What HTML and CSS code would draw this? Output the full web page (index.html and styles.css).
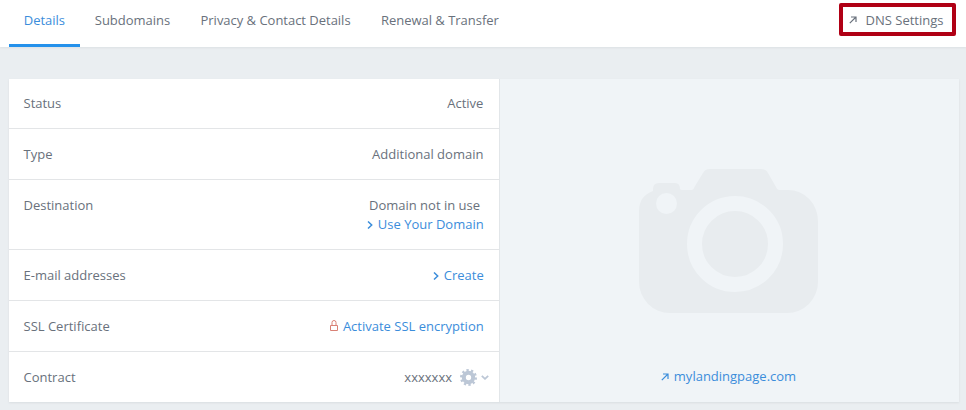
FILE: index.html
```html
<!DOCTYPE html>
<html lang="en">
<head>
<meta charset="utf-8">
<title>Domain details</title>
<link rel="stylesheet" href="styles.css">
</head>
<body>
<header class="topbar">
  <nav class="tabs">
    <a class="tab active">Details</a>
    <a class="tab">Subdomains</a>
    <a class="tab">Privacy &amp; Contact Details</a>
    <a class="tab">Renewal &amp; Transfer</a>
  </nav>
  <a class="dns"><svg class="arrow" viewBox="0 0 8 8"><path d="M2 1H7v5M7 1 .8 7.200"/></svg><span>DNS Settings</span></a>
</header>
<main class="card">
  <section class="rows">
    <div class="row first"><span>Status</span><span>Active</span></div>
    <div class="row"><span>Type</span><span>Additional domain</span></div>
    <div class="row tall"><span>Destination</span>
      <div class="stack"><span class="unused">Domain not in use</span><a class="link"><svg class="chev" viewBox="0 0 6 8"><path d="M1 .5 4.700 4 1 7.500"/></svg>Use Your Domain</a></div></div>
    <div class="row"><span>E-mail addresses</span><a class="link"><svg class="chev" viewBox="0 0 6 8"><path d="M1 .5 4.700 4 1 7.500"/></svg>Create</a></div>
    <div class="row"><span>SSL Certificate</span><a class="link"><svg class="lock" viewBox="0 0 9 11"><path d="M.5 5.500h7v5h-7zM2 5.500V2.500a2 2 0 0 1 4 0v3"/></svg>Activate SSL encryption</a></div>
    <div class="row last"><span>Contract</span>
      <div class="contract"><span>xxxxxxx</span>
        <svg class="gear" viewBox="0 0 16 16"><g fill="none" stroke="#bcc7d6"><circle cx="8" cy="8" r="4.400" stroke-width="3.800"/><circle cx="8" cy="8" r="6.800" stroke-width="2.400" stroke-dasharray="2.136 2.136"/></g></svg>
        <svg class="down" viewBox="0 0 8 5"><path d="M.8.800 4 3.800 7.200.800"/></svg>
      </div></div>
  </section>
  <section class="preview">
    <svg class="camera" viewBox="0 0 180 144"><path fill="#e8ecef" d="M14 22V20Q14 14 20 14H36Q41 14 41 20 41 21 43 21H53Q55 20 56 17L64 4Q66 0 71 0H122Q127 0 129 4L137 18Q138 21 140 21H149A30 31 0 0 1 179 52V113A31 31 0 0 1 148 144H31A31 31 0 0 1 0 113V42Q0 27 14 22Z"/><circle cx="27.500" cy="34.500" r="10.500" fill="#f0f4f7"/><circle cx="96" cy="75" r="40.500" fill="none" stroke="#f0f4f7" stroke-width="15"/></svg>
    <a class="site"><svg class="arrow" viewBox="0 0 8 8"><path d="M2 1H7v5M7 1 .8 7.200"/></svg><span>mylandingpage.com</span></a>
  </section>
</main>
</body>
</html>
```
FILE: styles.css
```css
* { box-sizing: border-box; }
body {
  margin: 0;
  height: 410px;
  overflow: hidden;
  background: #eaeef1;
  color: #69717c;
  font: 13px/19px "Open Sans", sans-serif;
}
svg { display: block; flex: none; fill: none; }
.topbar {
  display: flex;
  justify-content: space-between;
  height: 47px;
  padding-left: 9px;
  background: #fff;
  box-shadow: 0 1px 2px #dce0e3;
}
.tabs { display: flex; letter-spacing: -0.02px; }
.tab { padding: 11px 15.600px 0 14.800px; border-bottom: 3px solid transparent; white-space: nowrap; }
.active { width: 71px; color: #3b8ddb; border-color: #2491eb; }
.dns {
  display: flex;
  align-items: center;
  justify-content: space-between;
  width: 117px;
  height: 33px;
  margin: 3px 10px 0 0;
  padding: 1px 8.500px 0 6px;
  border: 4px solid #b00015;
  border-radius: 2px;
}
.arrow { width: 8px; height: 8px; stroke: currentColor; stroke-width: 1.2; }
.card {
  display: flex;
  width: 950px;
  height: 323px;
  margin: 32px 0 0 9px;
  box-shadow: 0 1px 2px #d9dee1;
}
.rows { width: 491px; background: #fff; border-right: 1px solid #e2e6e9; }
.row {
  display: flex;
  justify-content: space-between;
  height: 51px;
  padding: 16px 15.600px 0 14.500px;
  border-bottom: 1px solid #e3e5e7;
}
.first { height: 50px; padding-top: 15px; }
.tall { height: 70px; }
.last { height: 50px; border: 0; padding-right: 10px; }
.stack { display: flex; flex-direction: column; align-items: flex-end; }
.unused { padding-right: 3.400px; }
.link { display: flex; height: 19px; align-items: center; margin-right: -0.300px; color: #3b8ddb; }
.chev { width: 6px; height: 8px; margin-right: 5px; stroke: currentColor; stroke-width: 1.5; }
.lock { width: 9px; height: 11px; margin: 0 4px 2px 0; stroke: #d98175; }
.contract { display: flex; height: 19px; align-items: center; }
.gear { width: 17px; height: 17px; margin: 0 4px 0 8px; }
.down { width: 8px; height: 5px; stroke: #bcc7d6; stroke-width: 1.8; }
.preview {
  display: flex;
  flex-direction: column;
  align-items: center;
  flex: 1;
  padding: 90px 2px 0 0;
  background: #f0f4f7;
}
.camera { width: 180px; height: 144px; }
.site { display: flex; align-items: center; gap: 5px; margin-top: 54px; color: #3b8ddb; }
```
